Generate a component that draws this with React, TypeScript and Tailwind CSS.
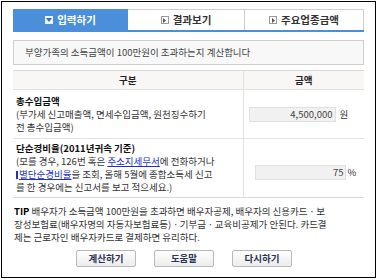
export default function App() {
  return (
    <div className="w-[378px] h-[280px] bg-white p-px font-['Noto_Sans_CJK_KR',sans-serif] text-[9.5px] text-[#333]">
      <div className="w-[375px] h-[277px] border border-black px-[11px] pt-[7px]">
        {/* Tabs */}
        <div className="flex h-[23px] border-b-2 border-[#4b8fdb] text-[10.5px] font-bold">
          <div className="w-[115px] bg-[#4b8fdb] text-white flex items-center justify-center gap-[4px]">
            <span className="w-[8px] h-[8px] bg-white/90 flex items-center justify-center">
              <svg width="6" height="4" viewBox="0 0 6 4">
                <path d="M0 0h6L3 4z" fill="#3b6fb0" />
              </svg>
            </span>
            입력하기
          </div>
          <div className="w-[117px] border-t border-r border-[#cfcfcf] flex items-center justify-center gap-[4px] text-[#333]">
            <span className="w-[8px] h-[8px] border border-[#999] flex items-center justify-center">
              <svg width="3" height="5" viewBox="0 0 3 5">
                <path d="M0 0l3 2.5L0 5z" fill="#555" />
              </svg>
            </span>
            결과보기
          </div>
          <div className="flex-1 border-t border-r border-[#cfcfcf] flex items-center justify-center gap-[4px] text-[#333]">
            <span className="w-[8px] h-[8px] border border-[#999] flex items-center justify-center">
              <svg width="3" height="5" viewBox="0 0 3 5">
                <path d="M0 0l3 2.5L0 5z" fill="#555" />
              </svg>
            </span>
            주요업종금액
          </div>
        </div>

        {/* Info */}
        <div className="mt-[8px] h-[25px] border border-[#cfcfcf] bg-[#f8f8f8] pl-[11px] flex items-center text-[#444]">
          부양가족의 소득금액이 100만원이 초과하는지 계산합니다
        </div>

        {/* Table */}
        <table className="mt-[5px] w-full border-collapse border-y border-[#d9d9d9]">
          <thead>
            <tr className="h-[19px] bg-[#f9f6f6] font-bold text-[#222]">
              <th className="w-[230px] border-b border-r border-[#e2e2e2]">구분</th>
              <th className="border-b border-[#e2e2e2]">금액</th>
            </tr>
          </thead>
          <tbody className="leading-[13px]">
            <tr className="h-[49px]">
              <td className="border-b border-r border-[#e2e2e2] pl-[3px] align-middle whitespace-nowrap">
                <div className="font-bold text-[#111]">총수입금액</div>
                <div>(부가세 신고매출액, 면세수입금액, 원천징수하기</div>
                <div>전 총수입금액)</div>
              </td>
              <td className="border-b border-[#e2e2e2] align-middle">
                <div className="flex items-center pl-[5px] gap-[4px]">
                  <div className="w-[87px] h-[15px] bg-[#f1f1f1] border border-[#e0e0e0] text-right pr-[2px] leading-[13px] text-[#444]">
                    4,500,000
                  </div>
                  <span>원</span>
                </div>
              </td>
            </tr>
            <tr className="h-[59px]">
              <td className="border-r border-[#e2e2e2] pl-[3px] align-middle whitespace-nowrap">
                <div className="font-bold text-[#111]">단순경비율(2011년귀속 기준)</div>
                <div>
                  (모를 경우, 126번 혹은 <span className="text-[#2230c8] underline">주소지세무서</span>에 전화하거나
                </div>
                <div>
                  <span className="text-[#2230c8] underline">
                    <span className="inline-block w-[2px] h-[8px] bg-[#2230c8] mr-[1px] align-[-1px]" />
                    별단순경비율
                  </span>
                  을 조회, 올해 5월에 종합소득세 신고
                </div>
                <div>를 한 경우에는 신고서를 보고 적으세요.)</div>
              </td>
              <td className="align-middle">
                <div className="flex items-center pl-[11px] gap-[2px] pt-[8px]">
                  <div className="w-[91px] h-[15px] bg-[#f1f1f1] border border-[#e0e0e0] text-right pr-[1px] leading-[13px] text-[#444]">
                    75
                  </div>
                  <span>%</span>
                </div>
              </td>
            </tr>
          </tbody>
        </table>

        {/* TIP */}
        <div className="mt-[7px] pl-[1px] leading-[13px] whitespace-nowrap text-[#333]">
          <div>
            <span className="font-bold text-black">TIP</span> 배우자가 소득금액 100만원을 초과하면 배우자공제, 배우자의 신용카드ㆍ보
          </div>
          <div>장성보험료(배우자명의 자동차보험료등)ㆍ기부금ㆍ교육비공제가 안된다. 카드결</div>
          <div>제는 근로자인 배우자카드로 결제하면 유리하다.</div>
        </div>

        {/* Buttons */}
        <div className="mt-[6px] flex justify-center gap-[18px] pr-[9px]">
          {['계산하기', '도움말', '다시하기'].map((label) => (
            <button
              key={label}
              className="w-[60px] h-[17px] border border-[#b9b9b9] rounded-[2px] bg-gradient-to-b from-white to-[#ececec] font-bold text-[#2a3450] text-[9.5px] leading-[15px]"
            >
              {label}
            </button>
          ))}
        </div>
      </div>
    </div>
  )
}
